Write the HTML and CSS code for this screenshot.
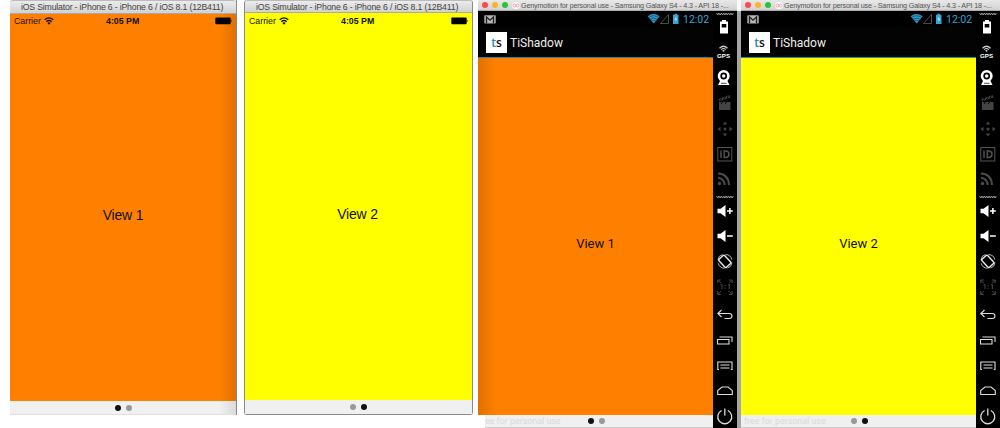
FILE: index.html
```
<!DOCTYPE html>
<html lang="en">
<head>
<meta charset="utf-8">
<title>Scrollable views</title>
<link rel="stylesheet" href="styles.css">
</head>
<body>
<svg class="defs" aria-hidden="true">
  <symbol id="wifi" viewBox="0 0 10 8">
    <path d="M.7 2.8Q5-1 9.3 2.8M2.3 4.7Q5 2.3 7.7 4.7" fill="none" stroke="currentColor" stroke-width="1.3"/>
    <path d="M3.4 5.9Q5 4.7 6.6 5.9L5 7.7Z" fill="currentColor"/>
  </symbol>
  <symbol id="battery" viewBox="0 0 18 8">
    <rect x=".3" y=".6" width="15.4" height="6.6" rx="1" fill="#000"/>
    <path d="M16.3 2.7Q18 3.8 16.3 5Z" fill="#000"/>
  </symbol>
  <symbol id="mail" viewBox="0 0 12 9">
    <rect x=".3" y=".3" width="11.4" height="8.2" rx=".8" fill="#b5b5b5"/>
    <path d="M2.5 8.500V2L6 5.200 9.500 2V8.500" fill="none" stroke="#222" stroke-width="1.300"/>
  </symbol>
  <symbol id="status" viewBox="0 0 34 12">
    <path d="M.7 3.2Q6.500-1.300 12.600 3.200L6.700 10.500Z" fill="#2f9dcb"/>
    <path d="M1.500 4.500Q6.600 1 11.800 4.500M3 6.200Q6.600 3.800 10.300 6.200M4.500 8Q6.600 6.600 8.800 8" fill="none" stroke="#06334a" stroke-width=".6"/>
    <path d="M13.500 10.500H21.500V1.500Z" fill="none" stroke="#555" stroke-width=".9"/>
    <path d="M26 1.800H27.500V.8H30V1.800H31.500V11H26Z" fill="#33a5d6"/>
    <path d="M29.500 3.300L27.300 6.500H29L28.200 9.300 30.400 5.800H28.800Z" fill="#eef"/>
  </symbol>
  <symbol id="tools" viewBox="0 11 24 417">
    <g fill="none" stroke="#aaa" stroke-width=".9">
      <path d="M3.500 13l1.200 2 1.200-2 1.200 2 1.200-2 1.200 2 1.200-2 1.200 2 1.200-2 1.200 2 1.200-2 1.200 2 1.200-2 1.200 2 1.200-2"/>
      <path d="M3.500 196l1.200 2 1.200-2 1.200 2 1.200-2 1.200 2 1.200-2 1.200 2 1.200-2 1.200 2 1.200-2 1.200 2 1.200-2 1.200 2 1.200-2"/>
    </g>
    <path d="M9 20H13V21.500H15V33.500H7V21.500H9Z" fill="#fff"/>
    <rect x="8.700" y="24" width="4.600" height="3.500" fill="#000"/>
    <path d="M6.500 48.200Q10.500 44.300 14.500 48.200M8.200 49.700Q10.500 47.300 12.800 49.700" fill="none" stroke="#ccc" stroke-width="1.200"/>
    <circle cx="10.500" cy="50.700" r="1" fill="#ccc"/>
    <text x="4" y="57.900" class="gps" textLength="13" lengthAdjust="spacingAndGlyphs">GPS</text>
    <circle cx="10.700" cy="76" r="6" fill="#fff"/>
    <circle cx="10.700" cy="76" r="3.400" fill="#000"/>
    <circle cx="10.700" cy="76" r="1.700" fill="#fff"/>
    <path d="M7 81H14.500L16.500 85H5Z" fill="#fff"/>
    <path d="M8 83.300H13.500" stroke="#000" stroke-width=".7"/>
    <g fill="#444">
      <path d="M6 102H17.500V110H6ZM5.500 99L16.500 95 17.300 97.500 6.200 101.300Z"/>
      <path d="M7 100.800L9 97.600M10.500 99.600L12.500 96.500M14 98.500L15.500 95.500M8 104L9.500 102M12 104L13.500 102" stroke="#000"/>
      <path d="M12 121.500l2.300 3h-4.600zM12 136.500l2.300-3h-4.600zM4.500 129l3-2.300v4.600zM19.500 129l-3-2.300v4.600z"/>
      <circle cx="12" cy="129" r="1.500"/>
    </g>
    <rect x="4.800" y="147.500" width="14" height="13.500" fill="none" stroke="#555"/>
    <path d="M8 150.500V158M11.200 151H13Q16 151.500 16 154.300T13 157.500H11.200Z" fill="none" stroke="#555" stroke-width="1.400"/>
    <path d="M5 173.500Q15.500 174 16 185M5 177.800Q11 178.500 11.700 185" fill="none" stroke="#4c4c4c" stroke-width="2"/>
    <circle cx="6.500" cy="183.500" r="1.700" fill="#4c4c4c"/>
    <g fill="#fff">
      <path d="M4.500 208.700H7.500L12.500 205V217L7.500 213.300H4.500Z"/>
      <path d="M4.500 233.700H7.500L12.500 230V242L7.500 238.300H4.500Z"/>
    </g>
    <path d="M14 211H19.800M16.900 208.100V213.900M14 236H19.800" stroke="#fff" stroke-width="1.500"/>
    <g fill="none" stroke="#e8e8e8">
      <rect x="8" y="256" width="7.600" height="10.800" rx="1" transform="rotate(-43 11.800 261.400)" stroke-width="1.400"/>
      <path d="M5 260Q5.300 255.500 9.500 254.500M19 262.500Q18.700 267 14.500 268M12.500 254.500Q17.800 254.800 18.800 259.500M11.500 268.300Q6.500 268 5.200 263.300" stroke-width=".8"/>
    </g>
    <g fill="none" stroke="#4a4a4a">
      <path d="M4.800 283V280H7.800M5 280.200l3 3M15.800 280H19.200V283M19 280.200l-3 3M4.800 291V294.500H7.800M5 294.200l3-3M15.800 294.500H19.200V291M19 294.200l-3-3"/>
      <path d="M7.500 285L9 284.500V289M15 285L16.300 284.500V289M12 285.200V286.300M12 287.700V288.800"/>
    </g>
    <g fill="none" stroke="#ddd" stroke-width="1.100">
      <path d="M8.500 310L4.800 313.500 8.500 317M5 313.500H16Q19 313.500 19 316T16 318.500H11.500"/>
      <path d="M4.500 339.500H16V344H4.500ZM6.500 337H19V342"/>
      <path d="M6 369.500H4.800V362H19V369.500H17.800M7.500 365H16.500M7.500 368H16.500"/>
      <path d="M4.700 394.500V390.500L9 387H15L19.300 390.500V394.500Z"/>
      <path d="M8.600 410.500A7 7 0 1 0 14.900 410.500M11.800 408.500V415.500" stroke-width="1.300"/>
    </g>
  </symbol>
</svg>
<main class="stage">
  <section class="ios first">
    <header class="ios-title"><span>iOS Simulator - iPhone 6 - iPhone 6 / iOS 8.1 (12B411)</span></header>
    <div class="ios-screen orange">
      <div class="ios-status"><span class="carrier">Carrier</span><svg class="ios-wifi"><use href="#wifi"/></svg><b>4:05 PM</b><svg class="ios-battery"><use href="#battery"/></svg></div>
      <div class="ios-label">View 1</div>
    </div>
    <footer class="pager"><i class="on"></i><i></i></footer>
  </section>
  <section class="ios second">
    <header class="ios-title"><span>iOS Simulator - iPhone 6 - iPhone 6 / iOS 8.1 (12B411)</span></header>
    <div class="ios-screen yellow">
      <div class="ios-status"><span class="carrier">Carrier</span><svg class="ios-wifi"><use href="#wifi"/></svg><b>4:05 PM</b><svg class="ios-battery"><use href="#battery"/></svg></div>
      <div class="ios-label">View 2</div>
    </div>
    <footer class="pager"><i></i><i class="on"></i></footer>
  </section>
  <section class="droid third">
    <header class="droid-title"><i class="red"></i><i class="amber"></i><i class="green"></i><svg class="logo" viewBox="0 0 8 6"><circle cx="2.300" cy="3" r="1.500"/><circle cx="5.700" cy="3" r="1.500"/></svg><span>Genymotion for personal use - Samsung Galaxy S4 - 4.3 - API 18 -...</span></header>
    <div class="droid-body">
      <div class="droid-screen">
        <div class="droid-status"><svg class="mail"><use href="#mail"/></svg><svg class="signals"><use href="#status"/></svg><span>12:02</span></div>
        <div class="action-bar"><div class="app-icon"><span>t</span>s</div><span class="app-name">TiShadow</span></div>
        <div class="droid-view orange">View 1</div>
        <footer class="droid-pager"><span>ee for personal use</span><i class="on"></i><i></i></footer>
      </div>
      <svg class="tools"><use href="#tools"/></svg>
    </div>
  </section>
  <section class="droid fourth">
    <header class="droid-title"><i class="red"></i><i class="amber"></i><i class="green"></i><svg class="logo" viewBox="0 0 8 6"><circle cx="2.300" cy="3" r="1.500"/><circle cx="5.700" cy="3" r="1.500"/></svg><span>Genymotion for personal use - Samsung Galaxy S4 - 4.3 - API 18 -...</span></header>
    <div class="droid-body">
      <div class="droid-screen">
        <div class="droid-status"><svg class="mail"><use href="#mail"/></svg><svg class="signals"><use href="#status"/></svg><span>12:02</span></div>
        <div class="action-bar"><div class="app-icon"><span>t</span>s</div><span class="app-name">TiShadow</span></div>
        <div class="droid-view yellow">View 2</div>
        <footer class="droid-pager"><span>free for personal use</span><i></i><i class="on"></i></footer>
      </div>
      <svg class="tools"><use href="#tools"/></svg>
    </div>
  </section>
</main>
</body>
</html>
```
FILE: styles.css
```
* { box-sizing: border-box; }
body { margin: 0; background: #fff; overflow: hidden; }
svg { display: block; flex: none; }
.defs { display: none; }
.stage { display: flex; align-items: flex-start; width: 1000px; height: 428px; padding-left: 10px; font-family: "Liberation Sans", Arial, sans-serif; color: #111; }
.orange { background: #ff8000; }
.yellow { background: #ffff00; }

.ios { display: flex; flex-direction: column; height: 415px; flex: none; }
.ios.first { width: 227px; border-right: 1px solid #8a8a8a; }
.ios.second { width: 229px; margin-left: 7px; border: 1px solid #8a8a8a; border-top: 0; border-radius: 3px; }
.ios-title { height: 14px; flex: none; display: flex; align-items: center; padding: 1px 0 0 11px; background: linear-gradient(#ececec, #d2d2d2); border-top: 1px solid #bbb; border-bottom: 1px solid #aaa; border-radius: 3px 3px 0 0; color: #444; white-space: nowrap; }
.second .ios-title { height: 13px; }
.ios-title span { font-size: 8.700px; line-height: 11px; letter-spacing: -.17px; }
.ios-screen { flex: 1; display: flex; flex-direction: column; }
.first .ios-screen { background: linear-gradient(90deg, transparent 210px, rgba(100, 50, 0, .2)), #ff8000; }
.ios-status { display: flex; align-items: center; height: 15px; padding: 0 3px 0 4px; font-size: 8.800px; }
.first .ios-status { height: 14px; }
.carrier { width: 27px; }
.ios-wifi { width: 10px; height: 8px; margin-left: 3px; }
.ios-status b { width: 34px; margin-left: 52px; white-space: nowrap; font-size: 8.800px; }
.ios-battery { width: 18px; height: 8px; margin-left: auto; }
.ios-label { flex: 1; display: flex; align-items: center; justify-content: center; font-size: 14px; letter-spacing: -.2px; padding: 0 2px 1px 0; }
.first .ios-label { padding: 1px 0 0; }
.pager { height: 14px; flex: none; display: flex; gap: 5px; align-items: center; justify-content: center; padding-right: 1px; background: #f0f0f0; }
.first .pager { padding-right: 0; border-bottom: 1px solid #e2e2e2; background: linear-gradient(90deg, transparent 210px, #d9d9d9), #f0f0f0; }
.pager i, .droid-pager i { width: 6px; height: 6px; border-radius: 50%; background: #999; }
.pager .on, .droid-pager .on { background: #111; }

.droid { height: 428px; flex: none; display: flex; flex-direction: column; }
.third { width: 263px; margin-left: 5px; }
.fourth { width: 259px; }
.droid-title { height: 11px; flex: none; display: flex; align-items: center; gap: 4px; padding-left: 4px; background: linear-gradient(#e8e8e8, #d2d2d2); border-bottom: 1px solid #aaa; color: #555; white-space: nowrap; }
.third .droid-title { width: 259px; }
.droid-title i { width: 6px; height: 6px; flex: none; border-radius: 50%; }
.droid-title .red { background: #fc4b48; }
.droid-title .amber { background: #fdb32b; }
.droid-title .green { background: #28c33b; }
.logo { width: 8px; height: 7px; background: #fff; border-radius: 50%; fill: none; stroke: #e58aa0; stroke-width: .8; }
.droid-title span { font-size: 7.200px; line-height: 9px; margin-left: -3px; letter-spacing: -.165px; }
.droid-body { flex: 1; display: flex; }
.third .droid-body { border-right: 4px solid #a5a5a5; }
.droid-screen { width: 235px; flex: none; display: flex; flex-direction: column; }
.droid-status { height: 16px; flex: none; display: flex; align-items: center; padding: 0 4px 0 6px; background: #000; color: #33a5d6; font: 10.500px Roboto, sans-serif; }
.mail { width: 12px; height: 9px; }
.signals { width: 34px; height: 12px; margin-left: auto; }
.droid-status span { width: 26px; margin-left: 2px; }
.action-bar { height: 31px; flex: none; display: flex; align-items: center; gap: 3px; padding: 1px 0 0 8px; background: #030303; border-bottom: 1px solid #2586ac; color: #eee; font: 12px Roboto, sans-serif; }
.app-icon { width: 21px; height: 21px; display: flex; justify-content: center; align-items: center; background: #fff; color: #111; font: 600 12px "Open Sans", sans-serif; }
.app-icon span { color: #2988b9; }
.droid-view { height: 357px; display: flex; align-items: center; justify-content: center; padding-top: 13px; font: 13px Roboto, sans-serif; }
.third .droid-view { background: linear-gradient(90deg, rgba(100, 50, 0, .2), transparent 18px), #ff8000; }
.droid-pager { height: 13px; display: flex; align-items: center; gap: 5px; background: #f0f0f0; border-bottom: 1px solid #ccc; }
.third .droid-pager { margin-left: 7px; }
.droid-pager span { width: 98px; font: 8.900px Roboto, sans-serif; color: #d9d9d9; white-space: nowrap; }
.fourth .droid-pager span { width: 105px; padding-left: 3px; }
.tools { width: 24px; height: 417px; background: #000; }
.gps { font: bold 6px "Liberation Sans", sans-serif; fill: #fff; }
```
